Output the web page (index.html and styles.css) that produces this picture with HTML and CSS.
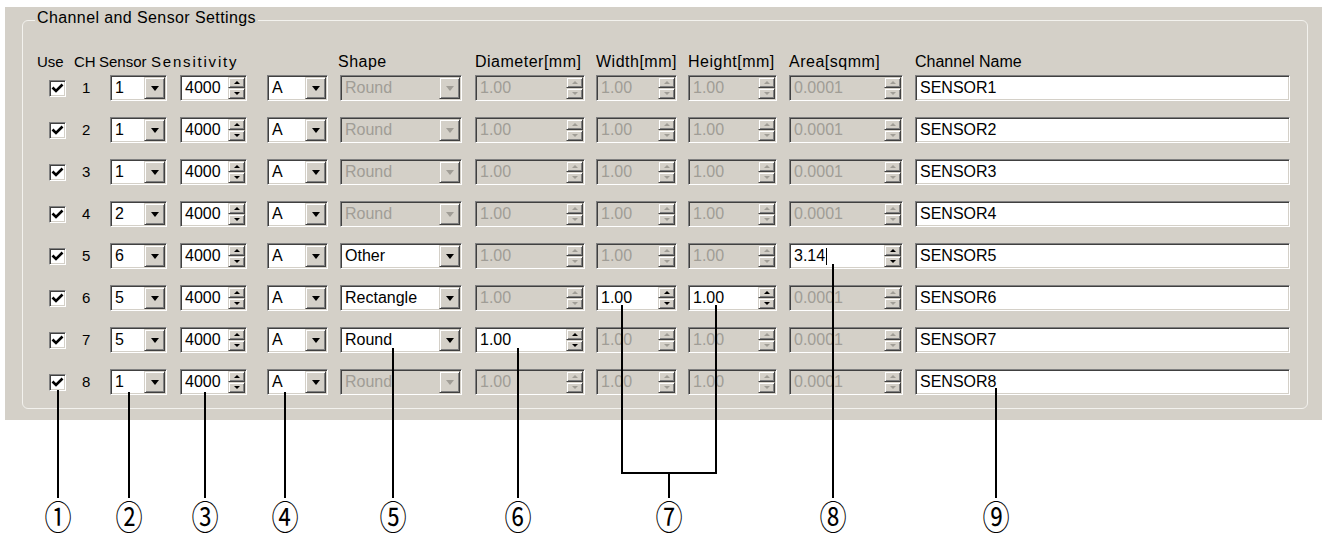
FILE: index.html
```html
<!DOCTYPE html>
<html>
<head>
<meta charset="utf-8">
<title>Channel and Sensor Settings</title>
<link rel="stylesheet" href="styles.css">
</head>
<body>
<div class="panel">
  <div class="group">
    <div class="gtitle">Channel and Sensor Settings</div>
    <div class="cols hdr">
      <div class="hd hd-first"><span class="w-use">Use</span><span class="w-ch">CH</span><span class="w-sensor">Sensor</span><span class="w-sens-l">Sensitivity</span></div>
      <div class="hd c6">Shape</div>
      <div class="hd">Diameter[mm]</div>
      <div class="hd">Width[mm]</div>
      <div class="hd">Height[mm]</div>
      <div class="hd">Area[sqmm]</div>
      <div class="hd hd-name">Channel Name</div>
    </div>
    <div class="cols rows">
      <!-- row 1 -->
      <div class="chk"><svg viewBox="0 0 15 15" width="15" height="15"><path d="M2.5 6.5 L6 10 L12.5 3.5" fill="none" stroke="#000" stroke-width="2.6"/></svg></div>
      <div class="chn">1</div>
      <div class="box combo w-s"><span class="val">1</span><span class="btn"><i class="arr"></i></span></div>
      <div class="box spin w-sens"><span class="val">4000</span><span class="sbs"><span class="sb"><i class="up"></i></span><span class="sb"><i class="dn"></i></span></span></div>
      <div class="box combo w-a"><span class="val">A</span><span class="btn"><i class="arr"></i></span></div>
      <div class="box combo w-shape dis"><span class="val">Round</span><span class="btn"><i class="arr"></i></span></div>
      <div class="box spin w-dia dis"><span class="val">1.00</span><span class="sbs"><span class="sb"><i class="up"></i></span><span class="sb"><i class="dn"></i></span></span></div>
      <div class="box spin w-wid dis"><span class="val">1.00</span><span class="sbs"><span class="sb"><i class="up"></i></span><span class="sb"><i class="dn"></i></span></span></div>
      <div class="box spin w-hei dis"><span class="val">1.00</span><span class="sbs"><span class="sb"><i class="up"></i></span><span class="sb"><i class="dn"></i></span></span></div>
      <div class="box spin w-area dis"><span class="val">0.0001</span><span class="sbs"><span class="sb"><i class="up"></i></span><span class="sb"><i class="dn"></i></span></span></div>
      <div class="box edit w-name"><span class="val">SENSOR1</span></div>

      <!-- row 2 -->
      <div class="chk"><svg viewBox="0 0 15 15" width="15" height="15"><path d="M2.5 6.5 L6 10 L12.5 3.5" fill="none" stroke="#000" stroke-width="2.6"/></svg></div>
      <div class="chn">2</div>
      <div class="box combo w-s"><span class="val">1</span><span class="btn"><i class="arr"></i></span></div>
      <div class="box spin w-sens"><span class="val">4000</span><span class="sbs"><span class="sb"><i class="up"></i></span><span class="sb"><i class="dn"></i></span></span></div>
      <div class="box combo w-a"><span class="val">A</span><span class="btn"><i class="arr"></i></span></div>
      <div class="box combo w-shape dis"><span class="val">Round</span><span class="btn"><i class="arr"></i></span></div>
      <div class="box spin w-dia dis"><span class="val">1.00</span><span class="sbs"><span class="sb"><i class="up"></i></span><span class="sb"><i class="dn"></i></span></span></div>
      <div class="box spin w-wid dis"><span class="val">1.00</span><span class="sbs"><span class="sb"><i class="up"></i></span><span class="sb"><i class="dn"></i></span></span></div>
      <div class="box spin w-hei dis"><span class="val">1.00</span><span class="sbs"><span class="sb"><i class="up"></i></span><span class="sb"><i class="dn"></i></span></span></div>
      <div class="box spin w-area dis"><span class="val">0.0001</span><span class="sbs"><span class="sb"><i class="up"></i></span><span class="sb"><i class="dn"></i></span></span></div>
      <div class="box edit w-name"><span class="val">SENSOR2</span></div>

      <!-- row 3 -->
      <div class="chk"><svg viewBox="0 0 15 15" width="15" height="15"><path d="M2.5 6.5 L6 10 L12.5 3.5" fill="none" stroke="#000" stroke-width="2.6"/></svg></div>
      <div class="chn">3</div>
      <div class="box combo w-s"><span class="val">1</span><span class="btn"><i class="arr"></i></span></div>
      <div class="box spin w-sens"><span class="val">4000</span><span class="sbs"><span class="sb"><i class="up"></i></span><span class="sb"><i class="dn"></i></span></span></div>
      <div class="box combo w-a"><span class="val">A</span><span class="btn"><i class="arr"></i></span></div>
      <div class="box combo w-shape dis"><span class="val">Round</span><span class="btn"><i class="arr"></i></span></div>
      <div class="box spin w-dia dis"><span class="val">1.00</span><span class="sbs"><span class="sb"><i class="up"></i></span><span class="sb"><i class="dn"></i></span></span></div>
      <div class="box spin w-wid dis"><span class="val">1.00</span><span class="sbs"><span class="sb"><i class="up"></i></span><span class="sb"><i class="dn"></i></span></span></div>
      <div class="box spin w-hei dis"><span class="val">1.00</span><span class="sbs"><span class="sb"><i class="up"></i></span><span class="sb"><i class="dn"></i></span></span></div>
      <div class="box spin w-area dis"><span class="val">0.0001</span><span class="sbs"><span class="sb"><i class="up"></i></span><span class="sb"><i class="dn"></i></span></span></div>
      <div class="box edit w-name"><span class="val">SENSOR3</span></div>

      <!-- row 4 -->
      <div class="chk"><svg viewBox="0 0 15 15" width="15" height="15"><path d="M2.5 6.5 L6 10 L12.5 3.5" fill="none" stroke="#000" stroke-width="2.6"/></svg></div>
      <div class="chn">4</div>
      <div class="box combo w-s"><span class="val">2</span><span class="btn"><i class="arr"></i></span></div>
      <div class="box spin w-sens"><span class="val">4000</span><span class="sbs"><span class="sb"><i class="up"></i></span><span class="sb"><i class="dn"></i></span></span></div>
      <div class="box combo w-a"><span class="val">A</span><span class="btn"><i class="arr"></i></span></div>
      <div class="box combo w-shape dis"><span class="val">Round</span><span class="btn"><i class="arr"></i></span></div>
      <div class="box spin w-dia dis"><span class="val">1.00</span><span class="sbs"><span class="sb"><i class="up"></i></span><span class="sb"><i class="dn"></i></span></span></div>
      <div class="box spin w-wid dis"><span class="val">1.00</span><span class="sbs"><span class="sb"><i class="up"></i></span><span class="sb"><i class="dn"></i></span></span></div>
      <div class="box spin w-hei dis"><span class="val">1.00</span><span class="sbs"><span class="sb"><i class="up"></i></span><span class="sb"><i class="dn"></i></span></span></div>
      <div class="box spin w-area dis"><span class="val">0.0001</span><span class="sbs"><span class="sb"><i class="up"></i></span><span class="sb"><i class="dn"></i></span></span></div>
      <div class="box edit w-name"><span class="val">SENSOR4</span></div>

      <!-- row 5 -->
      <div class="chk"><svg viewBox="0 0 15 15" width="15" height="15"><path d="M2.5 6.5 L6 10 L12.5 3.5" fill="none" stroke="#000" stroke-width="2.6"/></svg></div>
      <div class="chn">5</div>
      <div class="box combo w-s"><span class="val">6</span><span class="btn"><i class="arr"></i></span></div>
      <div class="box spin w-sens"><span class="val">4000</span><span class="sbs"><span class="sb"><i class="up"></i></span><span class="sb"><i class="dn"></i></span></span></div>
      <div class="box combo w-a"><span class="val">A</span><span class="btn"><i class="arr"></i></span></div>
      <div class="box combo w-shape"><span class="val">Other</span><span class="btn"><i class="arr"></i></span></div>
      <div class="box spin w-dia dis"><span class="val">1.00</span><span class="sbs"><span class="sb"><i class="up"></i></span><span class="sb"><i class="dn"></i></span></span></div>
      <div class="box spin w-wid dis"><span class="val">1.00</span><span class="sbs"><span class="sb"><i class="up"></i></span><span class="sb"><i class="dn"></i></span></span></div>
      <div class="box spin w-hei dis"><span class="val">1.00</span><span class="sbs"><span class="sb"><i class="up"></i></span><span class="sb"><i class="dn"></i></span></span></div>
      <div class="box spin w-area"><span class="val">3.14<span class="caret"></span></span><span class="sbs"><span class="sb"><i class="up"></i></span><span class="sb"><i class="dn"></i></span></span></div>
      <div class="box edit w-name"><span class="val">SENSOR5</span></div>

      <!-- row 6 -->
      <div class="chk"><svg viewBox="0 0 15 15" width="15" height="15"><path d="M2.5 6.5 L6 10 L12.5 3.5" fill="none" stroke="#000" stroke-width="2.6"/></svg></div>
      <div class="chn">6</div>
      <div class="box combo w-s"><span class="val">5</span><span class="btn"><i class="arr"></i></span></div>
      <div class="box spin w-sens"><span class="val">4000</span><span class="sbs"><span class="sb"><i class="up"></i></span><span class="sb"><i class="dn"></i></span></span></div>
      <div class="box combo w-a"><span class="val">A</span><span class="btn"><i class="arr"></i></span></div>
      <div class="box combo w-shape"><span class="val">Rectangle</span><span class="btn"><i class="arr"></i></span></div>
      <div class="box spin w-dia dis"><span class="val">1.00</span><span class="sbs"><span class="sb"><i class="up"></i></span><span class="sb"><i class="dn"></i></span></span></div>
      <div class="box spin w-wid"><span class="val">1.00</span><span class="sbs"><span class="sb"><i class="up"></i></span><span class="sb"><i class="dn"></i></span></span></div>
      <div class="box spin w-hei"><span class="val">1.00</span><span class="sbs"><span class="sb"><i class="up"></i></span><span class="sb"><i class="dn"></i></span></span></div>
      <div class="box spin w-area dis"><span class="val">0.0001</span><span class="sbs"><span class="sb"><i class="up"></i></span><span class="sb"><i class="dn"></i></span></span></div>
      <div class="box edit w-name"><span class="val">SENSOR6</span></div>

      <!-- row 7 -->
      <div class="chk"><svg viewBox="0 0 15 15" width="15" height="15"><path d="M2.5 6.5 L6 10 L12.5 3.5" fill="none" stroke="#000" stroke-width="2.6"/></svg></div>
      <div class="chn">7</div>
      <div class="box combo w-s"><span class="val">5</span><span class="btn"><i class="arr"></i></span></div>
      <div class="box spin w-sens"><span class="val">4000</span><span class="sbs"><span class="sb"><i class="up"></i></span><span class="sb"><i class="dn"></i></span></span></div>
      <div class="box combo w-a"><span class="val">A</span><span class="btn"><i class="arr"></i></span></div>
      <div class="box combo w-shape"><span class="val">Round</span><span class="btn"><i class="arr"></i></span></div>
      <div class="box spin w-dia"><span class="val">1.00</span><span class="sbs"><span class="sb"><i class="up"></i></span><span class="sb"><i class="dn"></i></span></span></div>
      <div class="box spin w-wid dis"><span class="val">1.00</span><span class="sbs"><span class="sb"><i class="up"></i></span><span class="sb"><i class="dn"></i></span></span></div>
      <div class="box spin w-hei dis"><span class="val">1.00</span><span class="sbs"><span class="sb"><i class="up"></i></span><span class="sb"><i class="dn"></i></span></span></div>
      <div class="box spin w-area dis"><span class="val">0.0001</span><span class="sbs"><span class="sb"><i class="up"></i></span><span class="sb"><i class="dn"></i></span></span></div>
      <div class="box edit w-name"><span class="val">SENSOR7</span></div>

      <!-- row 8 -->
      <div class="chk"><svg viewBox="0 0 15 15" width="15" height="15"><path d="M2.5 6.5 L6 10 L12.5 3.5" fill="none" stroke="#000" stroke-width="2.6"/></svg></div>
      <div class="chn">8</div>
      <div class="box combo w-s"><span class="val">1</span><span class="btn"><i class="arr"></i></span></div>
      <div class="box spin w-sens"><span class="val">4000</span><span class="sbs"><span class="sb"><i class="up"></i></span><span class="sb"><i class="dn"></i></span></span></div>
      <div class="box combo w-a"><span class="val">A</span><span class="btn"><i class="arr"></i></span></div>
      <div class="box combo w-shape dis"><span class="val">Round</span><span class="btn"><i class="arr"></i></span></div>
      <div class="box spin w-dia dis"><span class="val">1.00</span><span class="sbs"><span class="sb"><i class="up"></i></span><span class="sb"><i class="dn"></i></span></span></div>
      <div class="box spin w-wid dis"><span class="val">1.00</span><span class="sbs"><span class="sb"><i class="up"></i></span><span class="sb"><i class="dn"></i></span></span></div>
      <div class="box spin w-hei dis"><span class="val">1.00</span><span class="sbs"><span class="sb"><i class="up"></i></span><span class="sb"><i class="dn"></i></span></span></div>
      <div class="box spin w-area dis"><span class="val">0.0001</span><span class="sbs"><span class="sb"><i class="up"></i></span><span class="sb"><i class="dn"></i></span></span></div>
      <div class="box edit w-name"><span class="val">SENSOR8</span></div>
    </div>
  </div>
</div>

<svg class="callouts" width="1327" height="540" viewBox="0 0 1327 540">
  <g stroke="#000" stroke-width="2" fill="none" shape-rendering="crispEdges">
    <line x1="58" y1="390" x2="58" y2="498"/>
    <line x1="129" y1="392" x2="129" y2="498"/>
    <line x1="205" y1="392" x2="205" y2="498"/>
    <line x1="285" y1="392" x2="285" y2="498"/>
    <line x1="393" y1="348" x2="393" y2="498"/>
    <line x1="518" y1="348" x2="518" y2="498"/>
    <line x1="622" y1="305" x2="622" y2="474"/>
    <line x1="716" y1="305" x2="716" y2="474"/>
    <line x1="621" y1="473" x2="717" y2="473"/>
    <line x1="669" y1="473" x2="669" y2="498"/>
    <line x1="833" y1="264" x2="833" y2="498"/>
    <line x1="996" y1="388" x2="996" y2="498"/>
  </g>
  <g class="nums" text-anchor="middle">
    <text transform="translate(58 530) scale(0.8 1)">①</text>
    <text transform="translate(129 530) scale(0.8 1)">②</text>
    <text transform="translate(205 530) scale(0.8 1)">③</text>
    <text transform="translate(285 530) scale(0.8 1)">④</text>
    <text transform="translate(393 530) scale(0.8 1)">⑤</text>
    <text transform="translate(518 530) scale(0.8 1)">⑥</text>
    <text transform="translate(669 530) scale(0.8 1)">⑦</text>
    <text transform="translate(833 530) scale(0.8 1)">⑧</text>
    <text transform="translate(996 530) scale(0.8 1)">⑨</text>
  </g>
</svg>
</body>
</html>
```

FILE: styles.css
```css
html, body {
  margin: 0;
  padding: 0;
  background: #ffffff;
}

body {
  position: relative;
  width: 1327px;
  height: 540px;
  overflow: hidden;
  font-family: "Liberation Sans", Arial, sans-serif;
  color: #000;
}

.panel {
  margin: 7px 0 0 5px;
  width: 1317px;
  height: 413px;
  background: #d4d0c8;
  padding: 13px 0 0 17px;
  box-sizing: border-box;
}

.group {
  width: 1286px;
  height: 389px;
  box-sizing: border-box;
  border: 1px solid #f3f2ee;
  border-radius: 6px;
}

.gtitle {
  width: max-content;
  margin: -13px 0 0 12px;
  padding: 0 2px;
  background: #d4d0c8;
  font-size: 16px;
  letter-spacing: 0.4px;
  line-height: 20px;
}

.cols {
  display: grid;
  grid-template-columns: 36px 37px 70px 87px 73px 135px 121px 92px 101px 126px 375px;
  justify-items: start;
  margin-left: 14px;
}

.hdr {
  margin-top: 24px;
  height: 20px;
}

.rows {
  margin-top: 3px;
  grid-auto-rows: 26px;
  row-gap: 16px;
}

.hd {
  font-size: 16px;
  letter-spacing: 0.5px;
  line-height: 20px;
  white-space: nowrap;
}

.hd-name {
  letter-spacing: 0;
}

.hd-first {
  grid-column: 1 / 6;
  display: flex;
  font-size: 15px;
  letter-spacing: 0;
}

.c6 {
  grid-column: 6;
  margin-left: -2px;
}

.w-use { width: 37px; }
.w-ch { width: 25px; }
.w-sensor { width: 52px; }
.w-sens-l { letter-spacing: 1.8px; }

.chk {
  width: 17px;
  height: 17px;
  box-sizing: border-box;
  margin-left: 12px;
  align-self: center;
  background: #fff;
  border: 1px solid;
  border-color: #808080 #ffffff #ffffff #808080;
  box-shadow: inset 1px 1px 0 #404040, inset -1px -1px 0 #d4d0c8;
  display: flex;
  align-items: center;
  justify-content: center;
}

.chn {
  font-size: 15px;
  line-height: 26px;
  padding-left: 9px;
}

.box {
  height: 26px;
  box-sizing: border-box;
  border: 1px solid;
  border-color: #808080 #ffffff #ffffff #808080;
  box-shadow: inset 1px 1px 0 #404040, inset -1px -1px 0 #d4d0c8;
  background: #fff;
  padding: 1px;
  display: flex;
  font-size: 16px;
}

.box .val {
  flex: 1;
  min-width: 0;
  padding-left: 3px;
  line-height: 22px;
  white-space: nowrap;
  overflow: hidden;
}

.box.dis {
  background: #d4d0c8;
  color: #a09d96;
}

.w-s { width: 57px; }
.w-sens { width: 67px; }
.w-a { width: 61px; }
.w-shape { width: 122px; }
.w-dia { width: 110px; }
.w-wid { width: 81px; }
.w-hei { width: 89px; }
.w-area { width: 114px; }
.w-name { width: 375px; }

.btn {
  width: 21px;
  box-sizing: border-box;
  background: #d4d0c8;
  border: 1px solid;
  border-color: #d4d0c8 #404040 #404040 #d4d0c8;
  box-shadow: inset 1px 1px 0 #ffffff, inset -1px -1px 0 #808080;
  display: flex;
  align-items: center;
  justify-content: center;
}

.arr {
  display: block;
  width: 0;
  height: 0;
  border-left: 4px solid transparent;
  border-right: 4px solid transparent;
  border-top: 5px solid #000;
  margin-top: 1px;
}

.dis .arr {
  border-top-color: #a09d96;
}

.sbs {
  width: 17px;
  display: flex;
  flex-direction: column;
}

.sb {
  flex: 1;
  box-sizing: border-box;
  background: #d4d0c8;
  border: 1px solid;
  border-color: #d4d0c8 #404040 #404040 #d4d0c8;
  box-shadow: inset 1px 1px 0 #ffffff, inset -1px -1px 0 #808080;
  display: flex;
  align-items: center;
  justify-content: center;
}

.up {
  display: block;
  width: 0;
  height: 0;
  border-left: 3px solid transparent;
  border-right: 3px solid transparent;
  border-bottom: 3px solid #000;
}

.dn {
  display: block;
  width: 0;
  height: 0;
  border-left: 3px solid transparent;
  border-right: 3px solid transparent;
  border-top: 3px solid #000;
}

.dis .up { border-bottom-color: #a09d96; }
.dis .dn { border-top-color: #a09d96; }

.caret {
  display: inline-block;
  width: 1px;
  height: 17px;
  background: #000;
  vertical-align: -4px;
  margin-left: 1px;
}

.callouts {
  position: absolute;
  left: 0;
  top: 0;
  pointer-events: none;
}

.nums text {
  font-family: "Noto Sans CJK JP", "DejaVu Sans", sans-serif;
  font-size: 34px;
  fill: #000;
}
```
